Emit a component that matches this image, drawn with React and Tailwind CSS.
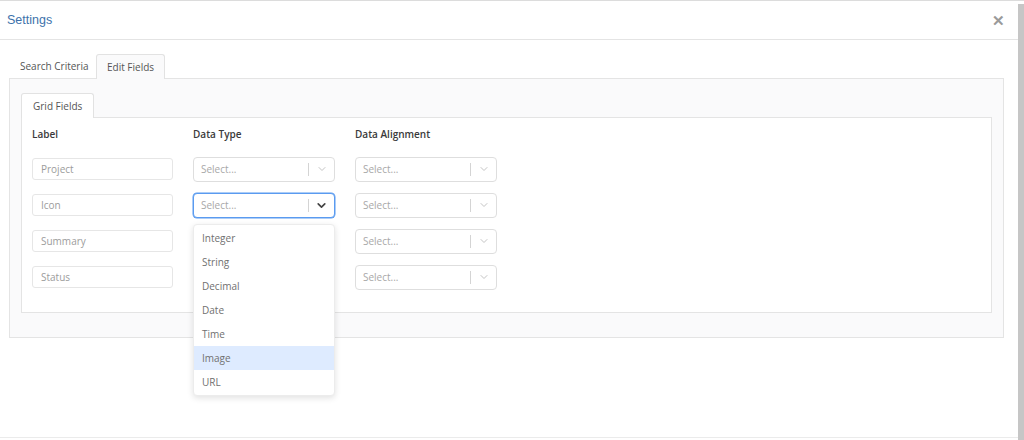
import React from 'react'

const ROWS = ['Project', 'Icon', 'Summary', 'Status']
const TYPES = ['Integer', 'String', 'Decimal', 'Date', 'Time', 'Image', 'URL']

function Chevron({ dark }) {
  return (
    <svg
      className={dark ? 'w-[11px] h-[11px] text-[#444]' : 'w-[10px] h-[10px] text-[#c4c4c4]'}
      viewBox="0 0 20 20"
      fill="none"
      stroke="currentColor"
      strokeWidth={dark ? 3 : 2}
      strokeLinecap="round"
      strokeLinejoin="round"
    >
      <path d="M4 7l6 6 6-6" />
    </svg>
  )
}

function Select({ focused }) {
  return (
    <div
      className={`w-[142px] h-[25px] rounded-[4px] bg-white flex items-center ${
        focused ? 'border border-[#5a9bf0] shadow-[0_0_0_0.5px_#5a9bf0]' : 'border border-[#dedede]'
      }`}
    >
      <span className="flex-1 pl-[7px] text-[10px] text-[#a8a8a8]">Select...</span>
      <span className="w-px h-[13px] bg-[#d4d4d4]" />
      <span className="w-[25px] flex items-center justify-center">
        <Chevron dark={focused} />
      </span>
    </div>
  )
}

export default function App() {
  return (
    <div className="w-[1024px] h-[440px] bg-white flex overflow-hidden border-t border-[#dcdcdc] font-['Open_Sans',sans-serif]">
      <div className="w-[1018px] h-[437px] border-b border-[#ebebeb] flex flex-col">
        {/* Header */}
        <div className="h-[39px] border-b border-[#e4e4e4] flex items-center justify-between pl-[7px] pr-[13px]">
          <span className="text-[12.5px] text-[#3d72ab] font-['Liberation_Sans',sans-serif]">Settings</span>
          <span className="text-[15px] leading-none font-bold text-[#9a9a9a] font-['Liberation_Sans',sans-serif]">✕</span>
        </div>

        <div className="pt-[14px] pl-[9px]">
          {/* Outer tabs */}
          <div className="flex items-end h-[24px]">
            <div className="w-[87px] h-[24px] flex items-center pl-[11px] text-[10px] text-[#555]">Search Criteria</div>
            <div className="h-[25px] px-[10px] -mb-px flex items-center border border-b-0 border-[#e2e2e2] rounded-t-[3px] bg-[#fafafb] text-[10px] text-[#555] relative z-10">
              Edit Fields
            </div>
          </div>

          {/* Outer panel */}
          <div className="w-[995px] h-[260px] border border-[#e4e4e4] bg-[#fafafb] pt-[14px] px-[11px]">
            <div className="flex">
              <div className="h-[25px] px-[11px] -mb-px flex items-center border border-b-0 border-[#e2e2e2] rounded-t-[3px] bg-white text-[10px] text-[#555] relative z-10">
                Grid Fields
              </div>
            </div>

            {/* Inner panel */}
            <div className="w-[971px] h-[196px] border border-[#e4e4e4] bg-white pt-[9px] px-[10px] relative">
              <div className="grid grid-cols-[161px_162px_150px] h-[14px] mb-[10px] items-center text-[10px] font-semibold text-[#3a3a3a]">
                <span>Label</span>
                <span>Data Type</span>
                <span>Data Alignment</span>
              </div>

              {ROWS.map((label, i) => (
                <div key={label} className="grid grid-cols-[161px_162px_150px] h-[36px] items-center">
                  <div className="w-[141px] h-[22px] border border-[#e6e6e6] rounded-[3px] flex items-center pl-[8px] text-[10px] text-[#9c9c9c]">
                    {label}
                  </div>
                  <Select focused={i === 1} />
                  <Select />
                </div>
              ))}

              {/* Dropdown menu */}
              <div className="absolute left-[171px] top-[106px] w-[142px] bg-white rounded-[4px] border border-[#ececec] shadow-[0_2px_6px_rgba(0,0,0,0.12)] py-[1px] z-20">
                {TYPES.map((t) => (
                  <div
                    key={t}
                    className={`h-[24px] flex items-center pl-[8px] text-[10px] text-[#707070] ${t === 'Image' ? 'bg-[#deebff]' : ''}`}
                  >
                    {t}
                  </div>
                ))}
              </div>
            </div>
          </div>
        </div>
      </div>

      {/* Scrollbar */}
      <div className="w-[6px] h-[440px] mt-[3px] bg-[#c6c6c6]" />
    </div>
  )
}
